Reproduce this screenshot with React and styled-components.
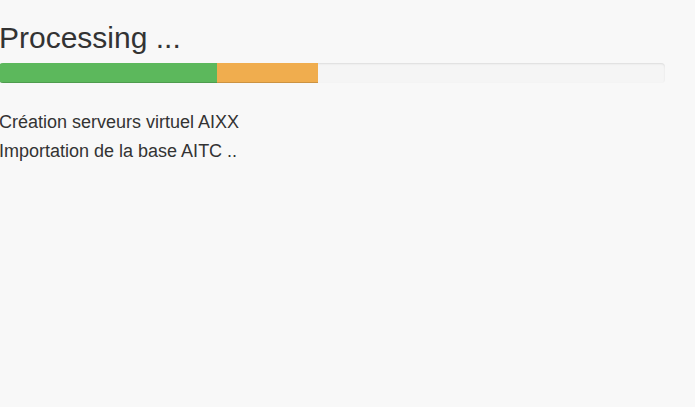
import React from 'react';
import styled, { createGlobalStyle } from 'styled-components';

const GlobalStyle = createGlobalStyle`
  html, body {
    margin: 0;
    padding: 0;
    background: #f8f8f8;
  }
  body {
    font-family: "Liberation Sans", Arial, sans-serif;
    color: #333;
  }
`;

const Wrapper = styled.div`
  width: 666px;
  margin-left: -1px;
  padding-top: 21px;
`;

const Title = styled.h2`
  font-size: 30px;
  font-weight: 400;
  line-height: 1.1;
  margin: 0 0 9px;
`;

const Progress = styled.div`
  display: flex;
  height: 20px;
  margin-bottom: 25px;
  overflow: hidden;
  background: #f5f5f5;
  border-radius: 4px;
  box-shadow: inset 0 1px 2px rgba(0, 0, 0, 0.1);
`;

const Bar = styled.div`
  height: 100%;
  background: ${p => (p.$variant === 'warning' ? '#f0ad4e' : '#5cb85c')};
  box-shadow: inset 0 -1px 0 rgba(0, 0, 0, 0.15);
`;

const Step = styled.p`
  font-size: 18px;
  line-height: 29px;
  margin: 0;
`;

const steps = ['Création serveurs virtuel AIXX', 'Importation de la base AITC ..'];

export default function App() {
  return (
    <>
      <GlobalStyle />
      <Wrapper>
        <Title>Processing ...</Title>
        <Progress>
          <Bar style={{ width: '218px' }} />
          <Bar $variant="warning" style={{ width: '101px' }} />
        </Progress>
        {steps.map(s => (
          <Step key={s}>{s}</Step>
        ))}
      </Wrapper>
    </>
  );
}
